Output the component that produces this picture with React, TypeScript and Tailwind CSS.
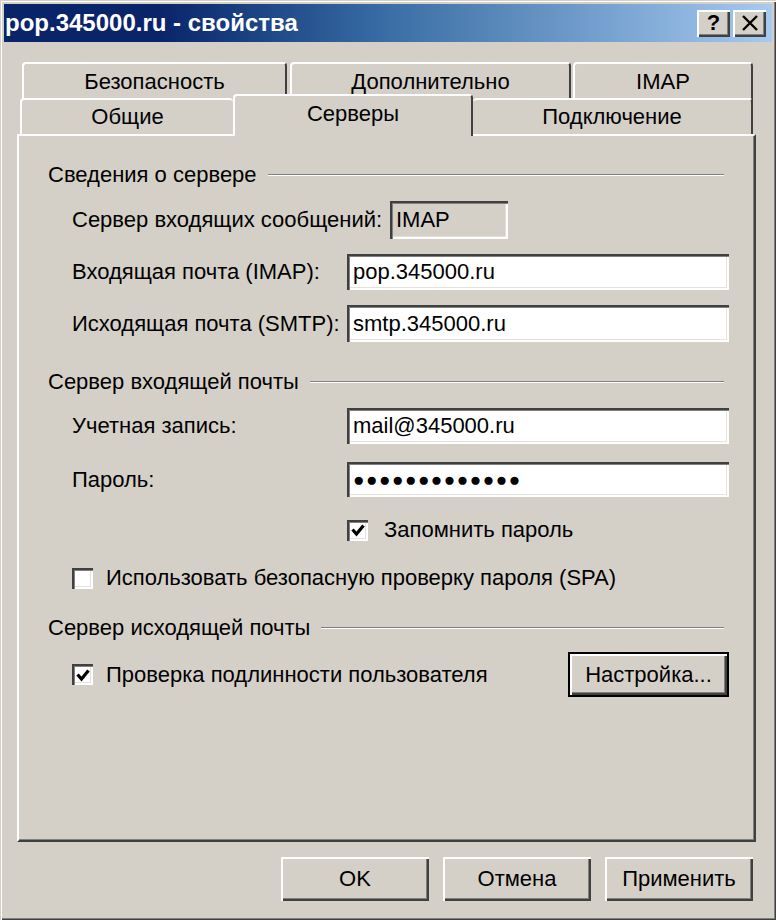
import React from 'react';

const font = { fontFamily: '"Liberation Sans", Arial, sans-serif' };

const raised =
  'bg-[#d4d0c8] shadow-[inset_2px_2px_0_#ffffff,inset_-2px_-2px_0_#404040,inset_-3px_-3px_0_#808080]';
const sunken =
  'shadow-[inset_2px_2px_0_#404040,inset_3px_3px_0_#808080,inset_-2px_-2px_0_#ffffff,inset_-3px_-3px_0_#e4e2dc]';

const Check: React.FC<{ checked?: boolean }> = ({ checked }) => (
  <div className={`w-[21px] h-[21px] bg-white flex items-center justify-center shrink-0 ${sunken}`}>
    {checked && (
      <svg width="16" height="16" viewBox="0 0 16 16">
        <path d="M2.5 7.5 L6.5 12 L13.5 3.5" fill="none" stroke="#000" strokeWidth="3.2" />
      </svg>
    )}
  </div>
);

const GroupTitle: React.FC<{ title: string }> = ({ title }) => (
  <div className="h-[24px] flex items-center">
    <span className="whitespace-nowrap">{title}</span>
    <div className="flex-1 ml-[11px] mr-[5px] border-t border-t-[#808080] border-b border-b-white" />
  </div>
);

const Field: React.FC<{ value: string; h: string; dots?: boolean }> = ({ value, h, dots }) => (
  <div className={`flex-1 bg-white flex items-center pl-[6px] ${h} ${sunken}`}>
    <span className={dots ? 'text-[19px] tracking-[1.5px]' : ''}>{value}</span>
  </div>
);

const Button: React.FC<{ label: string }> = ({ label }) => (
  <div className={`h-[44px] w-[148px] flex items-center justify-center ${raised}`}>{label}</div>
);

const App: React.FC = () => {
  return (
    <div
      style={font}
      className="w-[776px] h-[920px] bg-[#d4d0c8] text-[22px] leading-[24px] text-black p-[4px] shadow-[inset_1px_1px_0_#d4d0c8,inset_2px_2px_0_#ffffff,inset_-1px_-1px_0_#404040,inset_-2px_-2px_0_#808080]"
    >
      {/* caption */}
      <div className="h-[38px] bg-linear-to-r from-[#0a246a] from-20% via-[#3a6ea5] to-[#a6caf0] flex items-center pl-[1px] pr-[6px]">
        <span className="text-white font-bold text-[24px] leading-none">pop.345000.ru - свойства</span>
        <div className="ml-auto flex gap-[3px]">
          <div className={`w-[33px] h-[27px] flex items-center justify-center font-bold text-[22px] leading-none ${raised}`}>
            ?
          </div>
          <div className={`w-[33px] h-[27px] flex items-center justify-center ${raised}`}>
            <svg width="18" height="16" viewBox="0 0 18 16">
              <path d="M2 1 L16 15 M16 1 L2 15" stroke="#000" strokeWidth="2.4" />
            </svg>
          </div>
        </div>
      </div>

      <div className="pl-[13px] pr-[16px] pt-[20px]">
        {/* back tab row */}
        <div className="flex h-[36px] pl-[5px]">
          {[
            ['Безопасность', 'w-[265px] mr-[3px]'],
            ['Дополнительно', 'w-[281px] mr-[2px]'],
            ['IMAP', 'w-[180px]'],
          ].map(([t, w]) => (
            <div
              key={t}
              className={`${w} h-[40px] flex justify-center pt-[6px] rounded-t-[4px] border-t-2 border-l-2 border-white border-r-2 border-r-[#404040]`}
            >
              {t}
            </div>
          ))}
        </div>
        {/* front tab row */}
        <div className="flex h-[36px] pl-[3px] relative">
          <div className="w-[213px] h-[36px] bg-[#d4d0c8] flex justify-center pt-[5px] rounded-t-[4px] border-t-2 border-l-2 border-white">
            Общие
          </div>
          <div className="relative z-10 w-[240px] h-[42px] -mt-[4px] bg-[#d4d0c8] flex justify-center pt-[6px] rounded-t-[4px] border-t-2 border-l-2 border-white border-r-2 border-r-[#404040]">
            Серверы
          </div>
          <div className="w-[280px] h-[36px] bg-[#d4d0c8] flex justify-center pt-[5px] rounded-t-[4px] border-t-2 border-white border-r-2 border-r-[#404040]">
            Подключение
          </div>
        </div>

        {/* page */}
        <div className="h-[708px] border-2 border-white border-r-[#404040] border-b-[#404040] shadow-[inset_-1px_-1px_0_#808080] pl-[29px] pr-[25px] pt-[27px] flex flex-col">
          <GroupTitle title="Сведения о сервере" />

          <div className="mt-[14px] h-[38px] flex items-center pl-[24px]">
            <span className="w-[318px] whitespace-nowrap">Сервер входящих сообщений:</span>
            <div className={`w-[118px] h-[38px] flex items-center pl-[6px] ${sunken}`}>IMAP</div>
          </div>

          <div className="mt-[15px] flex items-center pl-[24px]">
            <span className="w-[275px] whitespace-nowrap">Входящая почта (IMAP):</span>
            <Field value="pop.345000.ru" h="h-[36px]" />
          </div>

          <div className="mt-[15px] flex items-center pl-[24px]">
            <span className="w-[275px] whitespace-nowrap">Исходящая почта (SMTP):</span>
            <Field value="smtp.345000.ru" h="h-[37px]" />
          </div>

          <div className="mt-[28px]">
            <GroupTitle title="Сервер входящей почты" />
          </div>

          <div className="mt-[14px] flex items-center pl-[24px]">
            <span className="w-[275px] whitespace-nowrap">Учетная запись:</span>
            <Field value="mail@345000.ru" h="h-[36px]" />
          </div>

          <div className="mt-[18px] flex items-center pl-[24px]">
            <span className="w-[275px] whitespace-nowrap">Пароль:</span>
            <Field value="●●●●●●●●●●●●●" h="h-[35px]" dots />
          </div>

          <div className="mt-[21px] h-[24px] flex items-center pl-[299px] gap-[16px]">
            <Check checked />
            <span>Запомнить пароль</span>
          </div>

          <div className="mt-[24px] h-[24px] flex items-center pl-[24px] gap-[13px]">
            <Check />
            <span>Использовать безопасную проверку пароля (SPA)</span>
          </div>

          <div className="mt-[26px]">
            <GroupTitle title="Сервер исходящей почты" />
          </div>

          <div className="mt-[12px] h-[45px] flex items-center pl-[24px]">
            <Check checked />
            <span className="ml-[13px]">Проверка подлинности пользователя</span>
            <div className="ml-auto w-[161px] h-[45px] border-2 border-black">
              <div className={`w-full h-full flex items-center justify-center ${raised}`}>Настройка...</div>
            </div>
          </div>
        </div>

        {/* dialog buttons */}
        <div className="mt-[15px] flex justify-end gap-[14px] mr-[3px]">
          <Button label="OK" />
          <Button label="Отмена" />
          <Button label="Применить" />
        </div>
      </div>
    </div>
  );
};

export default App;
